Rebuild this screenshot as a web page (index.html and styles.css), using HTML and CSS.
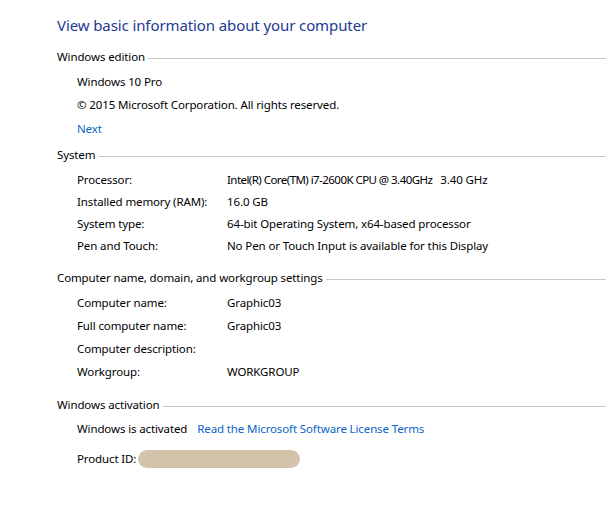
FILE: index.html
```html
<!DOCTYPE html>
<html lang="en">
<head>
    <meta charset="UTF-8">
    <meta name="viewport" content="width=device-width, initial-scale=1.0">
    <title>System</title>
    <link rel="stylesheet" href="styles.css">
</head>
<body>
    <h1 class="title">View basic information about your computer</h1>

    <div class="section edition">
        <h2 class="heading">Windows edition</h2>
        <div class="line">Windows 10 Pro</div>
        <div class="line">© 2015 Microsoft Corporation. All rights reserved.</div>
        <div class="line next"><a href="#">Next</a></div>
    </div>

    <div class="section system">
        <h2 class="heading">System</h2>
        <div class="rows">
            <div class="label">Processor:</div>
            <div class="value"><span class="cpu">Intel(R) Core(TM) i7-2600K CPU @ 3.40GHz</span><span class="speed">3.40 GHz</span></div>
            <div class="label">Installed memory (RAM):</div>
            <div class="value">16.0 GB</div>
            <div class="label">System type:</div>
            <div class="value">64-bit Operating System, x64-based processor</div>
            <div class="label">Pen and Touch:</div>
            <div class="value">No Pen or Touch Input is available for this Display</div>
        </div>
    </div>

    <div class="section computer">
        <h2 class="heading">Computer name, domain, and workgroup settings</h2>
        <div class="rows tall">
            <div class="label">Computer name:</div>
            <div class="value">Graphic03</div>
            <div class="label">Full computer name:</div>
            <div class="value">Graphic03</div>
            <div class="label">Computer description:</div>
            <div class="value"></div>
            <div class="label">Workgroup:</div>
            <div class="value">WORKGROUP</div>
        </div>
    </div>

    <div class="section activation">
        <h2 class="heading">Windows activation</h2>
        <div class="line activated">
            <span>Windows is activated</span>
            <a href="#">Read the Microsoft Software License Terms</a>
        </div>
        <div class="line product">
            <span>Product ID:</span>
            <span class="blur"></span>
        </div>
    </div>
</body>
</html>
```

FILE: styles.css
```css
body {
    margin: 0;
    padding: 0 0 0 57px;
    background: #fff;
    color: #000;
    font-family: "Noto Sans", "Liberation Sans", sans-serif;
    font-size: 11.5px;
    letter-spacing: -0.12px;
}

a {
    color: #0a64c8;
    text-decoration: none;
}

.title {
    margin: 0;
    padding-top: 14px;
    font-size: 15px;
    font-weight: normal;
    line-height: 22px;
    letter-spacing: -0.1px;
    color: #1e3991;
}

.heading {
    display: flex;
    align-items: center;
    margin: 0;
    font-size: 11.5px;
    font-weight: normal;
    line-height: 16px;
}

.heading::after {
    content: "";
    flex: 1;
    border-top: 1px solid #c8c8c8;
    margin-left: 3px;
    margin-top: 2px;
}

.section .line {
    padding-left: 20px;
    line-height: 23px;
}

.edition { margin-top: 13px; }
.edition .heading { margin-bottom: 5px; }
.edition .next { margin-top: 1px; }

.system { margin-top: 7px; }
.computer { margin-top: 14px; }
.activation { margin-top: 14px; }

.rows {
    display: grid;
    grid-template-columns: 150px 1fr;
    grid-auto-rows: 22px;
    align-items: center;
    padding: 5px 0 0 20px;
}

.rows.tall {
    grid-auto-rows: 23px;
}

.cpu {
    letter-spacing: -0.55px;
}

.speed {
    margin-left: 8px;
}

.activation .heading { margin-bottom: 4px; }

.activated {
    display: flex;
    gap: 10px;
}

.product {
    display: flex;
    align-items: center;
    margin-top: 7px;
}

.blur {
    display: inline-block;
    width: 162px;
    height: 18px;
    margin-left: 2px;
    border-radius: 9px;
    background: #d4c3ab;
}
```
